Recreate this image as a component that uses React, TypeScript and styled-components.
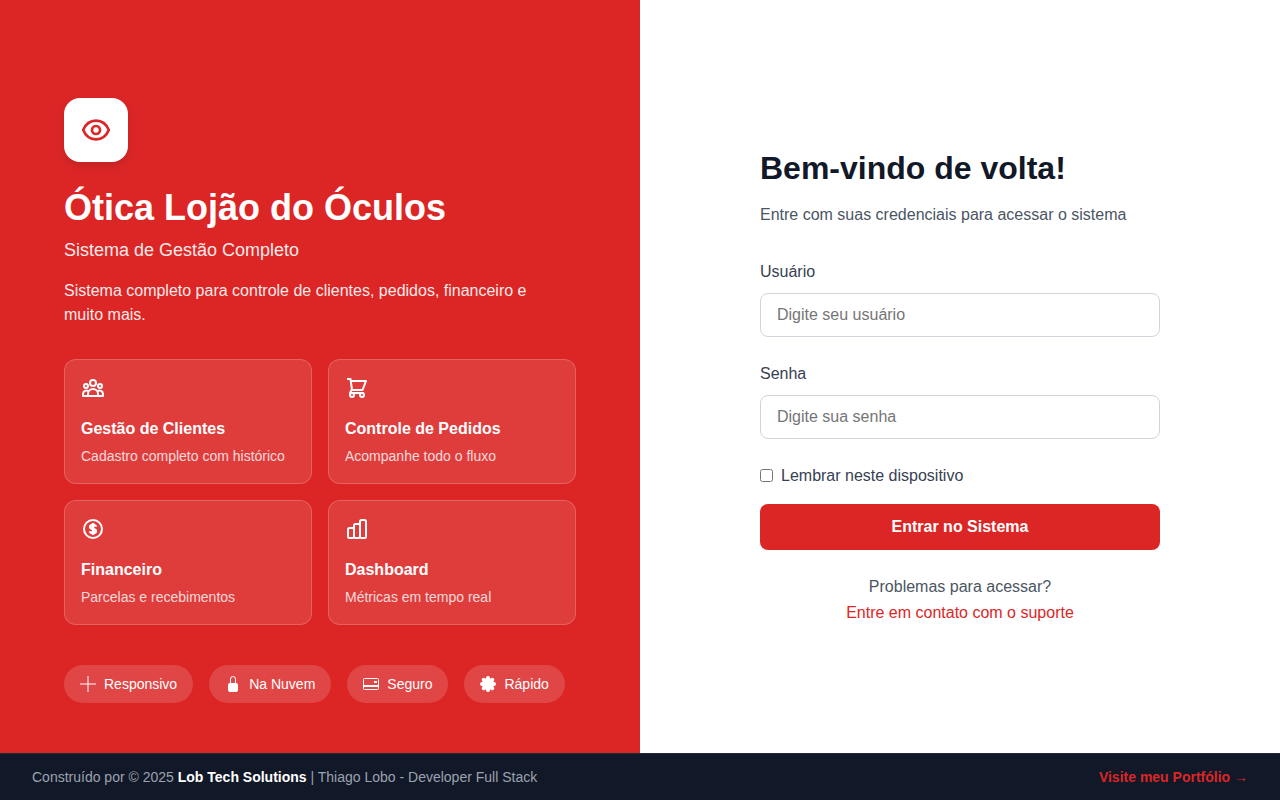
import React from "react";
import styled, { createGlobalStyle } from "styled-components";

const GlobalStyle = createGlobalStyle`
  *, *::before, *::after { box-sizing: border-box; }
  body {
    margin: 0;
    font-family: "Liberation Sans", Arial, sans-serif;
    font-size: 16px;
    line-height: 26px;
    color: #111827;
    background: #ffffff;
  }
  h1, h2, h3, p { margin: 0; }
`;

const Page = styled.div`
  min-height: 100vh;
  display: flex;
  flex-direction: column;
`;

const Main = styled.main`
  flex: 1;
  display: grid;
  grid-template-columns: 1fr 1fr;
  @media (max-width: 900px) {
    grid-template-columns: 1fr;
  }
`;

const BrandPanel = styled.section`
  display: flex;
  flex-direction: column;
  justify-content: center;
  padding: 96px 64px 48px;
  background: #dc2626;
  color: #ffffff;
`;

const Logo = styled.div`
  width: 64px;
  height: 64px;
  display: flex;
  align-items: center;
  justify-content: center;
  margin-bottom: 24px;
  border-radius: 16px;
  background: #ffffff;
  color: #dc2626;
  box-shadow: 0 4px 8px rgba(0, 0, 0, 0.12);
`;

const BrandTitle = styled.h1`
  margin-bottom: 8px;
  font-size: 36px;
  line-height: 43px;
  font-weight: 700;
`;

const BrandSubtitle = styled.p`
  margin-bottom: 16px;
  font-size: 18px;
  line-height: 26px;
  opacity: 0.9;
`;

const BrandText = styled.p`
  max-width: 480px;
  margin-bottom: 32px;
  line-height: 24px;
  opacity: 0.9;
`;

const FeatureGrid = styled.div`
  display: grid;
  grid-template-columns: 1fr 1fr;
  gap: 16px;
  margin-bottom: 40px;
`;

const FeatureCard = styled.article`
  padding: 16px;
  border: 1px solid rgba(255, 255, 255, 0.2);
  border-radius: 12px;
  background: rgba(255, 255, 255, 0.1);
`;

const FeatureTitle = styled.h3`
  margin: 16px 0 4px;
  font-size: 16px;
  line-height: 25px;
  font-weight: 600;
`;

const FeatureText = styled.p`
  font-size: 14px;
  line-height: 22px;
  opacity: 0.8;
`;

const PillRow = styled.div`
  display: flex;
  flex-wrap: wrap;
  gap: 16px;
`;

const Pill = styled.span`
  display: inline-flex;
  align-items: center;
  gap: 8px;
  padding: 8px 16px;
  border-radius: 20px;
  background: rgba(255, 255, 255, 0.15);
  font-size: 14px;
  line-height: 22px;
`;

const Icon = styled.svg<{ $size: number }>`
  display: block;
  flex: none;
  width: ${(p) => p.$size}px;
  height: ${(p) => p.$size}px;
`;

const FormPanel = styled.section`
  display: flex;
  align-items: center;
  justify-content: center;
  padding: 48px 32px 32px;
  background: #ffffff;
`;

const LoginForm = styled.form`
  width: 100%;
  max-width: 400px;
  display: flex;
  flex-direction: column;
`;

const FormTitle = styled.h2`
  margin-bottom: 8px;
  font-size: 32px;
  line-height: 51px;
  font-weight: 700;
  color: #111827;
`;

const FormIntro = styled.p`
  margin-bottom: 32px;
  line-height: 25px;
  color: #4b5563;
`;

const Field = styled.div`
  display: flex;
  flex-direction: column;
  gap: 8px;
  margin-bottom: 24px;
`;

const FieldLabel = styled.label`
  color: #374151;
`;

const TextInput = styled.input`
  width: 100%;
  height: 44px;
  padding: 12px 16px;
  border: 1px solid #d1d5db;
  border-radius: 8px;
  background: #ffffff;
  color: #111827;
  font: inherit;
  line-height: 18px;
  &::placeholder {
    color: #757575;
  }
`;

const Remember = styled.label`
  display: flex;
  align-items: center;
  gap: 8px;
  margin-bottom: 16px;
  line-height: 25px;
  color: #374151;
`;

const Checkbox = styled.input`
  width: 13px;
  height: 13px;
  margin: 0;
`;

const SubmitButton = styled.button`
  height: 46px;
  margin-bottom: 24px;
  border: 0;
  border-radius: 8px;
  background: #dc2626;
  color: #ffffff;
  font: inherit;
  font-weight: 600;
  cursor: pointer;
`;

const Help = styled.div`
  text-align: center;
  color: #4b5563;
`;

const SupportLink = styled.a`
  color: #dc2626;
  text-decoration: none;
`;

const Footer = styled.footer`
  display: flex;
  align-items: center;
  justify-content: space-between;
  flex-wrap: wrap;
  padding: 12px 32px;
  border-top: 1px solid #1f2937;
  background: #111827;
  color: #9ca3af;
  font-size: 14px;
  line-height: 22px;
`;

const Company = styled.strong`
  color: #ffffff;
  font-weight: 600;
`;

const PortfolioLink = styled.a`
  color: #dc2626;
  font-weight: 600;
  text-decoration: none;
`;

const line = {
  fill: "none",
  stroke: "currentColor",
  strokeWidth: 2,
  strokeLinejoin: "round" as const,
};

const EyeIcon = () => (
  <Icon $size={32} viewBox="0 0 24 24" aria-hidden="true" {...line}>
    <path d="M2.4 12C4.2 7.600 7.800 5 12 5s7.800 2.600 9.600 7c-1.800 4.400-5.400 7-9.600 7s-7.800-2.600-9.600-7Z" />
    <circle cx="12" cy="12" r="3" />
  </Icon>
);

const PeopleIcon = () => (
  <Icon $size={24} viewBox="0 0 24 24" aria-hidden="true" {...line}>
    <circle cx="12" cy="7" r="3" />
    <circle cx="5" cy="10" r="2" />
    <circle cx="19" cy="10" r="2" />
    <path d="M7 20v-2a5 5 0 0 1 10 0v2" />
    <path d="M7.500 15.200A3.500 3.500 0 0 0 2 18v2h20v-2a3.500 3.500 0 0 0-5.500-2.800" />
  </Icon>
);

const CartIcon = () => (
  <Icon $size={24} viewBox="0 0 24 24" aria-hidden="true" {...line}>
    <path d="M2 3h3.500l1.500 11M5.500 5H21l-3.500 9H6.500L5 17h14" />
    <circle cx="7" cy="19" r="2" />
    <circle cx="17" cy="19" r="2" />
  </Icon>
);

const MoneyIcon = () => (
  <Icon $size={24} viewBox="0 0 24 24" aria-hidden="true" {...line}>
    <circle cx="12" cy="12" r="9" />
    <path
      strokeWidth="2.4"
      d="M15 9.700C14.700 8.600 13.500 8 12 8c-1.700 0-2.900.7-2.900 2 0 2.800 5.800 1.200 5.800 4 0 1.300-1.200 2-2.900 2-1.600 0-2.800-.6-3.100-1.800M12 6v12"
    />
  </Icon>
);

const BarsIcon = () => (
  <Icon $size={24} viewBox="0 0 24 24" aria-hidden="true" {...line}>
    <rect x="3" y="11" width="6" height="10" rx="1.5" />
    <rect x="9" y="7" width="6" height="14" rx="1.5" />
    <rect x="15" y="3" width="6" height="18" rx="1.5" />
  </Icon>
);

const PlusIcon = () => (
  <Icon $size={16} viewBox="0 0 16 16" aria-hidden="true" fill="none" stroke="currentColor">
    <path d="M8 0v16M0 8h16" />
  </Icon>
);

const LockIcon = () => (
  <Icon $size={16} viewBox="0 0 16 16" aria-hidden="true" fill="none" stroke="currentColor">
    <path d="M5.500 8V3a2.500 2.500 0 0 1 5 0v5" />
    <rect x="3" y="7" width="10" height="9" rx="2" fill="currentColor" stroke="none" />
  </Icon>
);

const CardIcon = () => (
  <Icon $size={16} viewBox="0 0 16 16" aria-hidden="true" fill="none" stroke="currentColor">
    <rect x=".5" y="2.500" width="15" height="11" rx="1" />
    <path d="M.5 10h15" strokeWidth="2" />
    <rect x="11" y="5" width="3" height="2" fill="currentColor" stroke="none" />
  </Icon>
);

const lobes = [0, 45, 90, 135, 180, 225, 270, 315];

const BadgeIcon = () => (
  <Icon $size={16} viewBox="0 0 16 16" aria-hidden="true" fill="currentColor">
    <circle cx="8" cy="8" r="6" />
    {lobes.map((angle) => (
      <circle key={angle} cx="8" cy="2" r="2" transform={`rotate(${angle} 8 8)`} />
    ))}
  </Icon>
);

const features = [
  { icon: <PeopleIcon />, title: "Gestão de Clientes", text: "Cadastro completo com histórico" },
  { icon: <CartIcon />, title: "Controle de Pedidos", text: "Acompanhe todo o fluxo" },
  { icon: <MoneyIcon />, title: "Financeiro", text: "Parcelas e recebimentos" },
  { icon: <BarsIcon />, title: "Dashboard", text: "Métricas em tempo real" },
];

const pills = [
  { icon: <PlusIcon />, label: "Responsivo" },
  { icon: <LockIcon />, label: "Na Nuvem" },
  { icon: <CardIcon />, label: "Seguro" },
  { icon: <BadgeIcon />, label: "Rápido" },
];

export default function App() {
  return (
    <Page>
      <GlobalStyle />
      <Main>
        <BrandPanel>
          <Logo>
            <EyeIcon />
          </Logo>
          <BrandTitle>Ótica Lojão do Óculos</BrandTitle>
          <BrandSubtitle>Sistema de Gestão Completo</BrandSubtitle>
          <BrandText>
            Sistema completo para controle de clientes, pedidos, financeiro e muito mais.
          </BrandText>
          <FeatureGrid>
            {features.map((feature) => (
              <FeatureCard key={feature.title}>
                {feature.icon}
                <FeatureTitle>{feature.title}</FeatureTitle>
                <FeatureText>{feature.text}</FeatureText>
              </FeatureCard>
            ))}
          </FeatureGrid>
          <PillRow>
            {pills.map((pill) => (
              <Pill key={pill.label}>
                {pill.icon}
                {pill.label}
              </Pill>
            ))}
          </PillRow>
        </BrandPanel>
        <FormPanel>
          <LoginForm onSubmit={(event) => event.preventDefault()}>
            <FormTitle>Bem-vindo de volta!</FormTitle>
            <FormIntro>Entre com suas credenciais para acessar o sistema</FormIntro>
            <Field>
              <FieldLabel htmlFor="usuario">Usuário</FieldLabel>
              <TextInput id="usuario" type="text" placeholder="Digite seu usuário" />
            </Field>
            <Field>
              <FieldLabel htmlFor="senha">Senha</FieldLabel>
              <TextInput id="senha" type="password" placeholder="Digite sua senha" />
            </Field>
            <Remember htmlFor="lembrar">
              <Checkbox id="lembrar" type="checkbox" />
              Lembrar neste dispositivo
            </Remember>
            <SubmitButton type="submit">Entrar no Sistema</SubmitButton>
            <Help>
              <p>Problemas para acessar?</p>
              <SupportLink href="#suporte">Entre em contato com o suporte</SupportLink>
            </Help>
          </LoginForm>
        </FormPanel>
      </Main>
      <Footer>
        <p>
          Construído por © 2025 <Company>Lob Tech Solutions</Company> | Thiago Lobo - Developer Full
          Stack
        </p>
        <PortfolioLink href="#portfolio">Visite meu Portfólio →</PortfolioLink>
      </Footer>
    </Page>
  );
}
